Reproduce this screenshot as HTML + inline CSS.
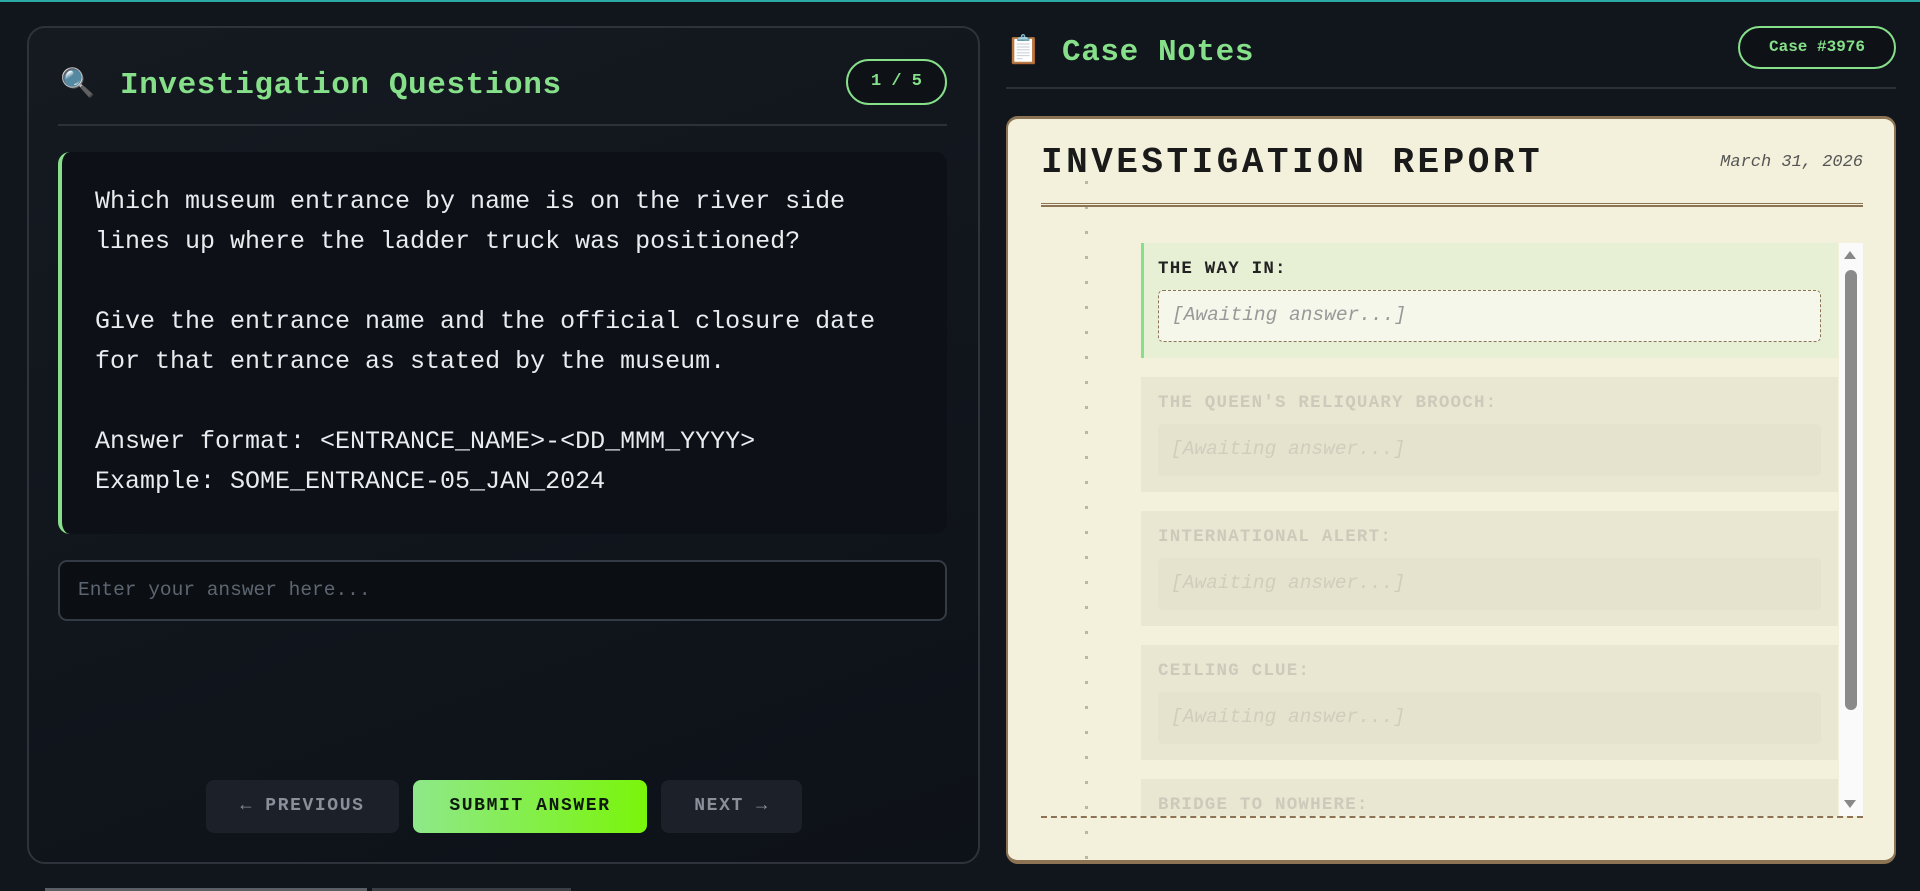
<!DOCTYPE html>
<html><head><meta charset="utf-8"><style>
*{box-sizing:border-box;margin:0;padding:0}
body{width:1920px;height:891px;overflow:hidden;background:#11151c;font-family:"Courier New","Nimbus Mono PS","FreeMono","Liberation Mono",monospace;position:relative}
.top{position:absolute;left:0;top:0;width:1920px;height:2px;background:#2aa9a5}
.lp{position:absolute;left:27px;top:26px;width:953px;height:838px;border:2px solid #2e333b;border-radius:18px;background:linear-gradient(160deg,#151a21,#0d1118)}
.h1{position:absolute;font-weight:bold;font-size:31px;color:#86e08a;letter-spacing:0.6px}
.badge{position:absolute;border:2px solid #86e08a;border-radius:24px;color:#86e08a;font-weight:bold;text-align:center;background:#0e1217}
.div{position:absolute;height:2px;background:#2c3139}
.qbox{position:absolute;left:58px;top:152px;width:889px;height:382px;background:#0d1117;border-left:4px solid #86e08a;border-radius:12px;padding:30px 33px;color:#e9ecef;font-size:25px;line-height:40px;white-space:pre}
.inp{position:absolute;left:58px;top:560px;width:889px;height:61px;border:2px solid #353b44;border-radius:9px;background:#0b0f14;color:#5d6570;font-size:19.5px;padding:0 18px;line-height:57px}
.btn{position:absolute;top:780px;height:53px;border-radius:8px;font-weight:bold;font-size:18px;letter-spacing:1.6px;text-align:center;line-height:53px}
.paper{position:absolute;left:1006px;top:116px;width:890px;height:748px;background:#f3f1dc;border:2px solid #8b7353;border-top-width:3px;border-bottom-width:4px;border-radius:12px;overflow:hidden}
.dots{position:absolute;left:77px;top:40px;width:3px;height:708px;background:repeating-linear-gradient(to bottom,transparent 0 22px,#b9b6a6 22px 25px)}
.sec{position:absolute;left:133px;width:697px;height:115px;padding:16px 17px;background:#eceadb}
.lab{font-weight:bold;font-size:17.5px;letter-spacing:1.2px;color:#222}
.ans{margin-top:11px;height:52px;border-radius:5px;background:#e6e5d2;font-style:italic;color:#999;font-size:19.5px;line-height:50px;padding-left:13px}
.fade{opacity:.22}
</style></head><body>
<div class="top"></div>
<div class="lp"></div>
<div style="position:absolute;left:60px;top:66px;font-size:28px">🔍</div>
<div class="h1" style="left:120px;top:68px">Investigation Questions</div>
<div class="badge" style="left:846px;top:59px;width:101px;height:46px;line-height:42px;font-size:17px">1 / 5</div>
<div class="div" style="left:58px;top:124px;width:889px"></div>
<div class="qbox">Which museum entrance by name is on the river side
lines up where the ladder truck was positioned?

Give the entrance name and the official closure date
for that entrance as stated by the museum.

Answer format: &lt;ENTRANCE_NAME&gt;-&lt;DD_MMM_YYYY&gt;
Example: SOME_ENTRANCE-05_JAN_2024</div>
<div class="inp">Enter your answer here...</div>
<div class="btn" style="left:206px;width:193px;background:#1c2028;color:#8a9099">← PREVIOUS</div>
<div class="btn" style="left:413px;width:234px;background:linear-gradient(90deg,#8ee88a,#7af50a);color:#0d1a0d">SUBMIT ANSWER</div>
<div class="btn" style="left:661px;width:141px;background:#1c2028;color:#8a9099">NEXT →</div>

<div style="position:absolute;left:1006px;top:33px;font-size:28px">📋</div>
<div class="h1" style="left:1062px;top:35px">Case Notes</div>
<div class="badge" style="left:1738px;top:26px;width:158px;height:43px;line-height:39px;font-size:16px">Case #3976</div>
<div class="div" style="left:1006px;top:87px;width:890px"></div>

<div class="paper">
<div class="dots"></div>
<div style="position:absolute;left:33px;top:23px;font-weight:bold;font-size:36px;letter-spacing:3.5px;color:#1a1a1a">INVESTIGATION REPORT</div>
<div style="position:absolute;right:31px;top:34px;font-style:italic;font-size:17px;color:#555">March 31, 2026</div>
<div style="position:absolute;left:33px;top:84px;width:822px;height:4px;border-top:1px solid #8b7353;border-bottom:2px solid #8b7353"></div>
<div style="position:absolute;left:133px;top:124px;width:722px;height:573px;overflow:hidden">
  <div class="sec" style="left:0;top:0;background:#e7f0d5;border-left:3px solid #86e08a;padding-left:14px"><div class="lab">THE WAY IN:</div><div class="ans" style="background:#f4f7ea;border:1.5px dashed #8b7353;line-height:48px">[Awaiting answer...]</div></div>
  <div class="sec fade" style="left:0;top:134px;background:#c9c6b0"><div class="lab" style="color:#444">THE QUEEN'S RELIQUARY BROOCH:</div><div class="ans" style="background:#b5b39c;color:#555">[Awaiting answer...]</div></div>
  <div class="sec fade" style="left:0;top:268px;background:#c9c6b0"><div class="lab" style="color:#444">INTERNATIONAL ALERT:</div><div class="ans" style="background:#b5b39c;color:#555">[Awaiting answer...]</div></div>
  <div class="sec fade" style="left:0;top:402px;background:#c9c6b0"><div class="lab" style="color:#444">CEILING CLUE:</div><div class="ans" style="background:#b5b39c;color:#555">[Awaiting answer...]</div></div>
  <div class="sec fade" style="left:0;top:536px;background:#c9c6b0"><div class="lab" style="color:#444">BRIDGE TO NOWHERE:</div></div>
  <div style="position:absolute;right:0;top:0;width:24px;height:573px;background:#fafafa"></div>
  <div style="position:absolute;right:7px;top:8px;width:0;height:0;border-left:6px solid transparent;border-right:6px solid transparent;border-bottom:8px solid #888"></div>
  <div style="position:absolute;right:6px;top:27px;width:12px;height:440px;border-radius:6px;background:#8a8a8a"></div>
  <div style="position:absolute;right:7px;bottom:8px;width:0;height:0;border-left:6px solid transparent;border-right:6px solid transparent;border-top:8px solid #888"></div>
</div>
<div style="position:absolute;left:33px;top:697px;width:822px;border-top:2px dashed #8b7353"></div>
</div>
<div style="position:absolute;left:45px;top:888px;width:322px;height:3px;background:#5a5f66"></div>
<div style="position:absolute;left:372px;top:888px;width:199px;height:3px;background:#3a3f46"></div>
</body></html>
